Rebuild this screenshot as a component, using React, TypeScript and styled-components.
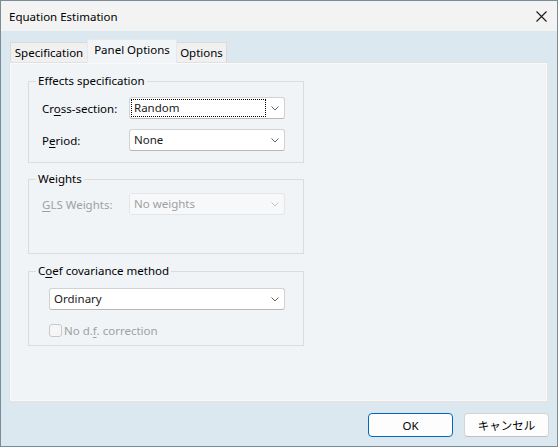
import React from "react";
import styled, { createGlobalStyle } from "styled-components";

const GlobalStyle = createGlobalStyle`
  html, body { margin: 0; padding: 0; }
  body {
    font-family: "Noto Sans", "Noto Sans CJK JP", sans-serif;
    font-size: 11.5px;
    color: #000;
  }
  * { box-sizing: border-box; }
`;

const Window = styled.div`
  width: 558px;
  height: 447px;
  border: 1px solid #7a8c98;
  display: flex;
  flex-direction: column;
  background: #dbe8ef;
`;

const TitleBar = styled.div`
  height: 30px;
  background: #f3f3f3;
  display: flex;
  align-items: center;
  justify-content: space-between;
  padding: 0 9px 0 8px;
  flex-shrink: 0;
`;

const Title = styled.span`
  font-size: 11.5px;
  color: #000;
`;

const CloseBtn = styled.div`
  width: 12px;
  height: 12px;
  display: flex;
  align-items: center;
  justify-content: center;
  margin-right: 1px;
`;

const Client = styled.div`
  flex: 1;
  display: flex;
  flex-direction: column;
  padding: 8px 8px 9px 8px;
`;

const TabStrip = styled.div`
  display: flex;
  align-items: flex-end;
  height: 23px;
  padding-left: 1px;
`;

const Tab = styled.div<{ $active?: boolean; $w: number }>`
  width: ${(p) => p.$w}px;
  height: ${(p) => (p.$active ? 24 : 20)}px;
  display: flex;
  justify-content: center;
  align-items: ${(p) => (p.$active ? "flex-start" : "center")};
  padding-top: ${(p) => (p.$active ? 2 : 0)}px;
  background: ${(p) => (p.$active ? "#f2f5f8" : "#f0f0f0")};
  border: 1px solid ${(p) => (p.$active ? "#e6e9eb" : "#dadada")};
  border-bottom: none;
  margin-bottom: ${(p) => (p.$active ? -1 : 0)}px;
  margin-left: ${(p) => (p.$active ? -1 : 0)}px;
  margin-right: ${(p) => (p.$active ? -1 : 0)}px;
  position: relative;
  z-index: ${(p) => (p.$active ? 2 : 1)};
  font-size: 11.5px;
  white-space: nowrap;
`;

const Panel = styled.div`
  height: 341px;
  width: 540px;
  background: #f0f4f7;
  border: 1px solid #dfe2e4;
  border-right: 2px solid #e4e6e8;
  border-bottom: 2px solid #e2e4e6;
  box-shadow: inset 1px 1px 0 #fafafa, inset -1px -1px 0 #f8f8f8;
  padding: 10px 0 0 18px;
  display: flex;
  flex-direction: column;
`;

const Group = styled.fieldset<{ $mt: number }>`
  margin: ${(p) => p.$mt}px 0 0 0;
  width: 276px;
  border: 1px solid #dcdcdc;
  padding: 0;
  min-width: 0;
`;

const GroupBody = styled.div<{ $pt: number; $pb: number; $pl: number }>`
  display: flex;
  flex-direction: column;
  padding: ${(p) => p.$pt}px 0 ${(p) => p.$pb}px ${(p) => p.$pl}px;
`;

const Legend = styled.legend`
  margin-left: 7px;
  padding: 0 2px;
  line-height: 16px;
  font-size: 11.5px;
  color: #000;
`;

const Row = styled.div<{ $gap?: number }>`
  display: flex;
  align-items: center;
  margin-top: ${(p) => p.$gap ?? 0}px;
`;

const Label = styled.span<{ $disabled?: boolean }>`
  width: 87px;
  color: ${(p) => (p.$disabled ? "#a0a0a0" : "#000")};
  white-space: nowrap;
`;

const U = styled.span`
  text-decoration: underline;
  text-underline-offset: 2px;
`;

const Combo = styled.div<{ $disabled?: boolean; $w?: number }>`
  width: ${(p) => p.$w ?? 156}px;
  height: 22px;
  background: ${(p) => (p.$disabled ? "#f7f8f9" : "#ffffff")};
  border: 1px solid ${(p) => (p.$disabled ? "#e3e5e7" : "#d2d2d2")};
  border-bottom-color: ${(p) => (p.$disabled ? "#e3e5e7" : "#b8b8b8")};
  border-radius: 3px;
  display: flex;
  align-items: center;
  padding: 0 5px 0 1px;
  color: ${(p) => (p.$disabled ? "#a0a0a0" : "#1a1a1a")};
`;

const ComboText = styled.span<{ $focus?: boolean }>`
  flex: 1;
  height: 18px;
  line-height: 16px;
  padding-left: 2px;
  border: 1px ${(p) => (p.$focus ? "dotted #000" : "solid transparent")};
  margin-right: ${(p) => (p.$focus ? 5 : 0)}px;
`;

const Chevron = ({ color }: { color: string }) => (
  <svg width="8" height="5" viewBox="0 0 8 5">
    <path d="M0.5 0.5 L4 4 L7.5 0.5" fill="none" stroke={color} strokeWidth="1" />
  </svg>
);

const CheckRow = styled.div`
  display: flex;
  align-items: center;
  gap: 2px;
  margin-top: 12px;
  height: 16px;
  color: #a0a0a0;
`;

const CheckBox = styled.div`
  width: 13px;
  height: 13px;
  border: 1px solid #c8c8c8;
  border-radius: 3px;
  background: #f6f6f6;
`;

const Footer = styled.div`
  display: flex;
  justify-content: flex-end;
  gap: 11px;
  margin-top: 10px;
`;

const Button = styled.div<{ $primary?: boolean }>`
  width: 85px;
  height: 24px;
  border-radius: 4px;
  background: #fdfdfd;
  border: 1px solid ${(p) => (p.$primary ? "#0067c0" : "#d4d4d4")};
  border-bottom-color: ${(p) => (p.$primary ? "#0067c0" : "#c0c0c0")};
  display: flex;
  align-items: center;
  justify-content: center;
  color: #000;
`;

export default function App() {
  return (
    <>
      <GlobalStyle />
      <Window>
        <TitleBar>
          <Title>Equation Estimation</Title>
          <CloseBtn>
            <svg width="11" height="11" viewBox="0 0 11 11">
              <path d="M0.5 0.5 L10.5 10.5 M10.5 0.5 L0.5 10.5" stroke="#1a1a1a" strokeWidth="1.1" />
            </svg>
          </CloseBtn>
        </TitleBar>
        <Client>
          <TabStrip>
            <Tab $w={78}>Specification</Tab>
            <Tab $w={90} $active>
              Panel Options
            </Tab>
            <Tab $w={51}>Options</Tab>
          </TabStrip>
          <Panel>
            <Group $mt={0}>
              <Legend>Effects specification</Legend>
              <GroupBody $pt={8} $pb={11} $pl={13}>
                <Row>
                  <Label>
                    Cr<U>o</U>ss-section:
                  </Label>
                  <Combo>
                    <ComboText $focus>Random</ComboText>
                    <Chevron color="#606060" />
                  </Combo>
                </Row>
                <Row $gap={10}>
                  <Label>
                    P<U>e</U>riod:
                  </Label>
                  <Combo>
                    <ComboText>None</ComboText>
                    <Chevron color="#606060" />
                  </Combo>
                </Row>
              </GroupBody>
            </Group>
            <Group $mt={8}>
              <Legend>Weights</Legend>
              <GroupBody $pt={6} $pb={38} $pl={13}>
                <Row>
                  <Label $disabled>
                    <U>G</U>LS Weights:
                  </Label>
                  <Combo $disabled>
                    <ComboText>No weights</ComboText>
                    <Chevron color="#c4c4c4" />
                  </Combo>
                </Row>
              </GroupBody>
            </Group>
            <Group $mt={9}>
              <Legend>
                C<U>o</U>ef covariance method
              </Legend>
              <GroupBody $pt={9} $pb={7} $pl={20}>
                <Combo $w={236}>
                  <ComboText>Ordinary</ComboText>
                  <Chevron color="#606060" />
                </Combo>
                <CheckRow>
                  <CheckBox />
                  <span>
                    No d.<U>f</U>. correction
                  </span>
                </CheckRow>
              </GroupBody>
            </Group>
          </Panel>
          <Footer>
            <Button $primary>OK</Button>
            <Button>キャンセル</Button>
          </Footer>
        </Client>
      </Window>
    </>
  );
}
